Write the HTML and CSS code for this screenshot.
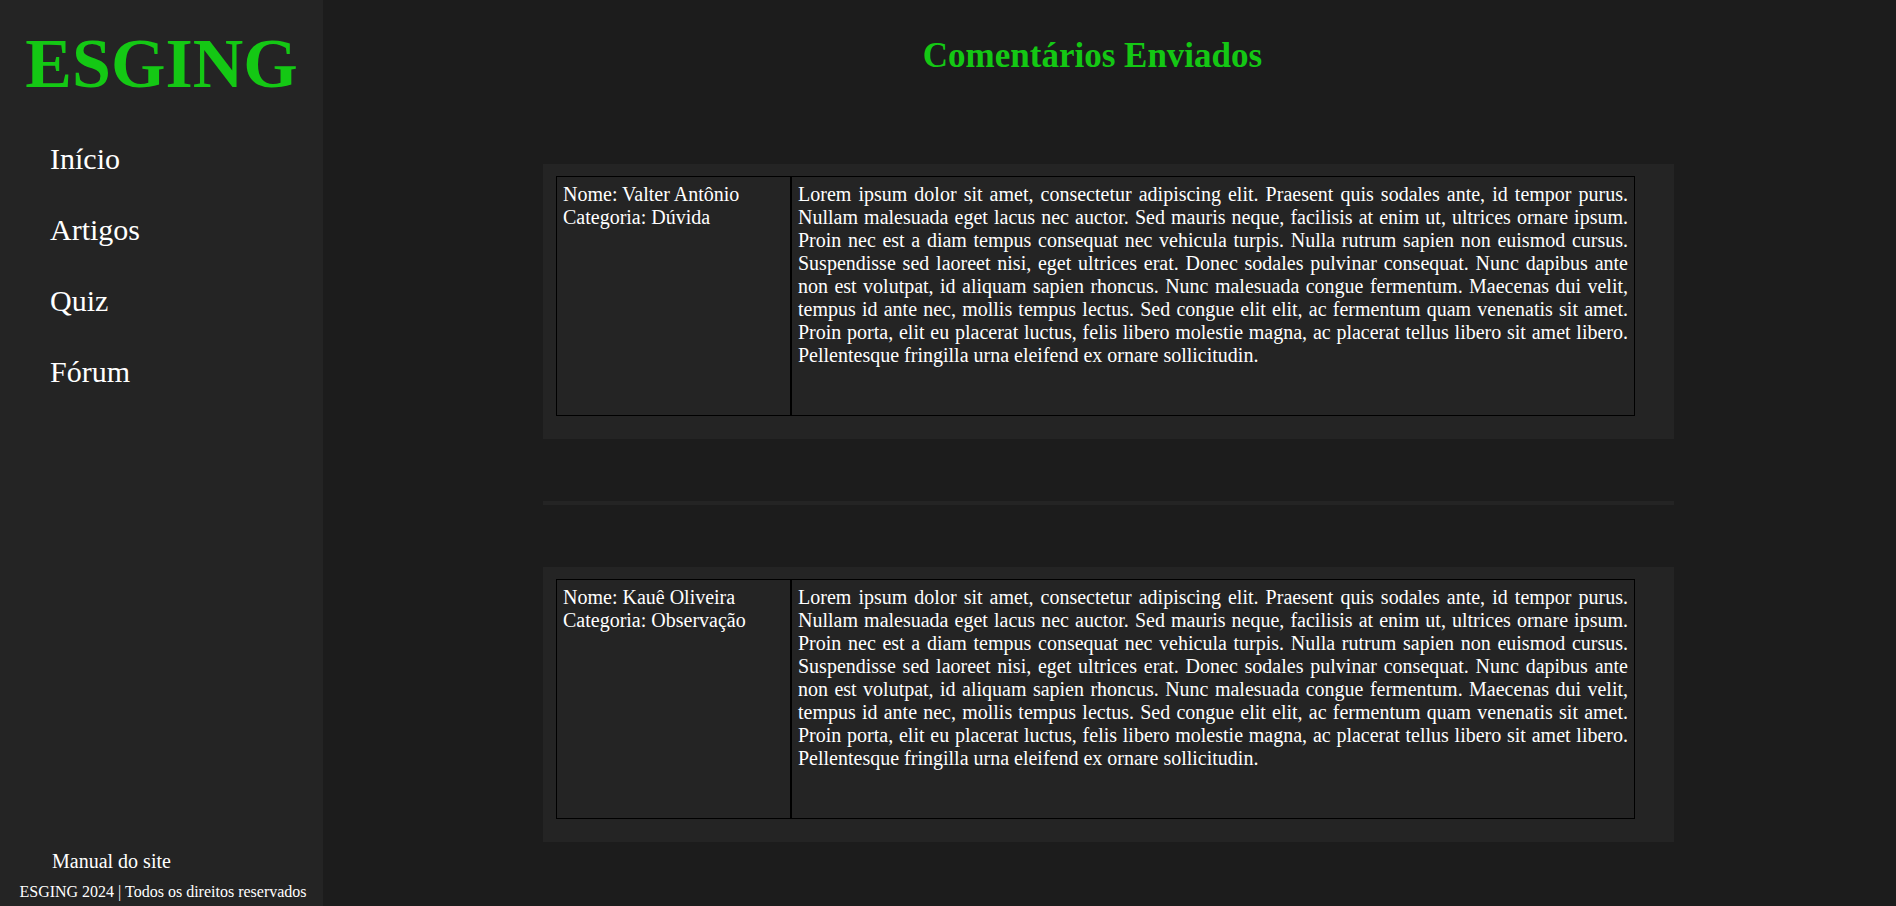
FILE: index.html
```html
<!DOCTYPE html>
<html lang="pt-BR">
<head>
<meta charset="utf-8">
<meta name="viewport" content="width=device-width, initial-scale=1">
<title>ESGING - Comentários Enviados</title>
<link rel="stylesheet" href="styles.css">
</head>
<body class="page">
<aside class="sidebar">
  <h1 class="logo">ESGING</h1>
  <nav class="menu">
    <a class="menu-link" href="#inicio">Início</a>
    <a class="menu-link" href="#artigos">Artigos</a>
    <a class="menu-link" href="#quiz">Quiz</a>
    <a class="menu-link" href="#forum">Fórum</a>
  </nav>
  <footer class="footer">
    <a class="manual" href="#manual">Manual do site</a>
    <p class="copyright">ESGING 2024 | Todos os direitos reservados</p>
  </footer>
</aside>
<main class="main">
  <h2 class="title">Comentários Enviados</h2>
  <div class="comments">
    <article class="card">
      <div class="author">
        <p>Nome: Valter Antônio</p>
        <p>Categoria: Dúvida</p>
      </div>
      <p class="message">Lorem ipsum dolor sit amet, consectetur adipiscing elit. Praesent quis sodales ante, id tempor purus. Nullam malesuada eget lacus nec auctor. Sed mauris neque, facilisis at enim ut, ultrices ornare ipsum. Proin nec est a diam tempus consequat nec vehicula turpis. Nulla rutrum sapien non euismod cursus. Suspendisse sed laoreet nisi, eget ultrices erat. Donec sodales pulvinar consequat. Nunc dapibus ante non est volutpat, id aliquam sapien rhoncus. Nunc malesuada congue fermentum. Maecenas dui velit, tempus id ante nec, mollis tempus lectus. Sed congue elit elit, ac fermentum quam venenatis sit amet. Proin porta, elit eu placerat luctus, felis libero molestie magna, ac placerat tellus libero sit amet libero. Pellentesque fringilla urna eleifend ex ornare sollicitudin.</p>
    </article>
    <hr class="divider">
    <article class="card">
      <div class="author">
        <p>Nome: Kauê Oliveira</p>
        <p>Categoria: Observação</p>
      </div>
      <p class="message">Lorem ipsum dolor sit amet, consectetur adipiscing elit. Praesent quis sodales ante, id tempor purus. Nullam malesuada eget lacus nec auctor. Sed mauris neque, facilisis at enim ut, ultrices ornare ipsum. Proin nec est a diam tempus consequat nec vehicula turpis. Nulla rutrum sapien non euismod cursus. Suspendisse sed laoreet nisi, eget ultrices erat. Donec sodales pulvinar consequat. Nunc dapibus ante non est volutpat, id aliquam sapien rhoncus. Nunc malesuada congue fermentum. Maecenas dui velit, tempus id ante nec, mollis tempus lectus. Sed congue elit elit, ac fermentum quam venenatis sit amet. Proin porta, elit eu placerat luctus, felis libero molestie magna, ac placerat tellus libero sit amet libero. Pellentesque fringilla urna eleifend ex ornare sollicitudin.</p>
    </article>
  </div>
</main>
</body>
</html>
```
FILE: styles.css
```css
* {
  box-sizing: border-box;
  margin: 0;
  padding: 0;
}

.page {
  display: grid;
  grid-template-columns: 323px minmax(0, 1fr);
  min-height: 100vh;
  background: #1c1c1c;
  color: #fff;
  font-family: "Liberation Serif", "Times New Roman", serif;
  font-size: 20px;
  line-height: 23px;
}

.sidebar {
  display: flex;
  flex-direction: column;
  position: sticky;
  top: 0;
  height: 100vh;
  background: #242424;
}

.logo {
  padding-top: 22px;
  color: #14c814;
  font-size: 70px;
  line-height: 83px;
  text-align: center;
}

.menu {
  display: flex;
  flex-direction: column;
  align-items: flex-start;
  gap: 36px;
  padding: 36px 50px;
}

.menu-link {
  color: inherit;
  font-size: 30px;
  line-height: 35px;
  text-decoration: none;
}

.footer {
  display: flex;
  flex-direction: column;
  align-items: flex-start;
  gap: 10px;
  margin-top: auto;
  padding-bottom: 5px;
}

.manual {
  margin-left: 52px;
  color: inherit;
  text-decoration: none;
}

.copyright {
  align-self: center;
  padding-left: 3px;
  font-size: 16px;
  line-height: 18px;
}

.main {
  padding: 35px 0 60px;
}

.title {
  padding-right: 34px;
  color: #14c814;
  font-size: 35px;
  line-height: 41px;
  text-align: center;
}

.comments {
  display: flex;
  flex-direction: column;
  gap: 62px;
  margin: 88px 222px 0 220px;
}

.card {
  display: grid;
  grid-template-columns: 235fr 844fr;
  grid-auto-rows: minmax(240px, auto);
  padding: 12px 39px 23px 13px;
  background: #242424;
}

.author,
.message {
  padding: 6px;
  border: 1px solid #000;
}

.message {
  text-align: justify;
}

.divider {
  height: 4px;
  border: 0;
  background: #242424;
}
```
